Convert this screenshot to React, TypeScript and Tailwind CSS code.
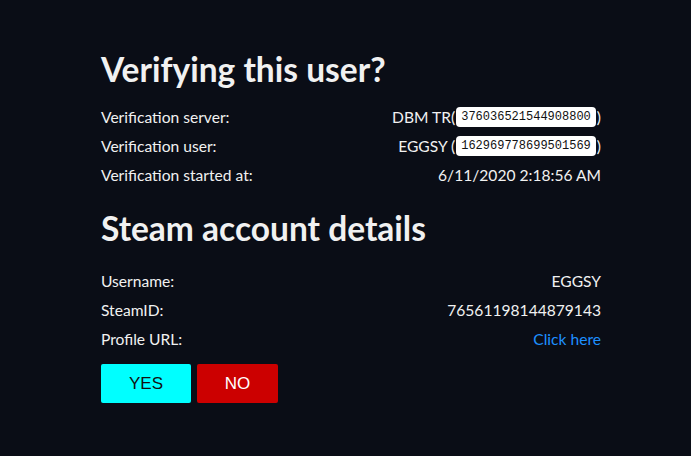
import React from "react";

const Row = ({ label, children }: { label: string; children: React.ReactNode }) => (
  <div className="flex justify-between items-center h-[29px]">
    <span>{label}</span>
    <span className="flex items-center">{children}</span>
  </div>
);

const Code = ({ v }: { v: string }) => (
  <code className="bg-white text-[#111] rounded-[4px] px-[5px] h-[20px] inline-flex items-center text-[12px] mx-[1px]" style={{ fontFamily: '"Liberation Mono", monospace' }}>
    {v}
  </code>
);

export default function App() {
  return (
    <div className="min-h-[456px] w-full bg-[#0a0d16] text-[#f1f1f1]" style={{ fontFamily: 'Lato, "Noto Sans", sans-serif' }}>
      <div className="w-[500px] ml-[101px] pt-[45px] text-[15.6px]">
        <h1 className="text-[33.5px] font-bold leading-[48px] mb-[10px]">Verifying this user?</h1>
        <Row label="Verification server:">
          DBM TR(<Code v="376036521544908800" />)
        </Row>
        <Row label="Verification user:">
          EGGSY (<Code v="162969778699501569" />)
        </Row>
        <Row label="Verification started at:">6/11/2020 2:18:56 AM</Row>
        <h2 className="text-[33.5px] font-bold leading-[48px] mt-[14px] mb-[15px]">Steam account details</h2>
        <Row label="Username:">EGGSY</Row>
        <Row label="SteamID:">76561198144879143</Row>
        <Row label="Profile URL:">
          <a className="text-[#1e90ff]">Click here</a>
        </Row>
        <div className="flex gap-[6px] mt-[10px]" style={{ fontFamily: '"Liberation Sans", Arial, sans-serif' }}>
          <button className="w-[90px] h-[39px] bg-[#00ffff] text-[#111] text-[17px] rounded-[2px]">YES</button>
          <button className="w-[81px] h-[39px] bg-[#cc0000] text-white text-[17px] rounded-[2px]">NO</button>
        </div>
      </div>
    </div>
  );
}
